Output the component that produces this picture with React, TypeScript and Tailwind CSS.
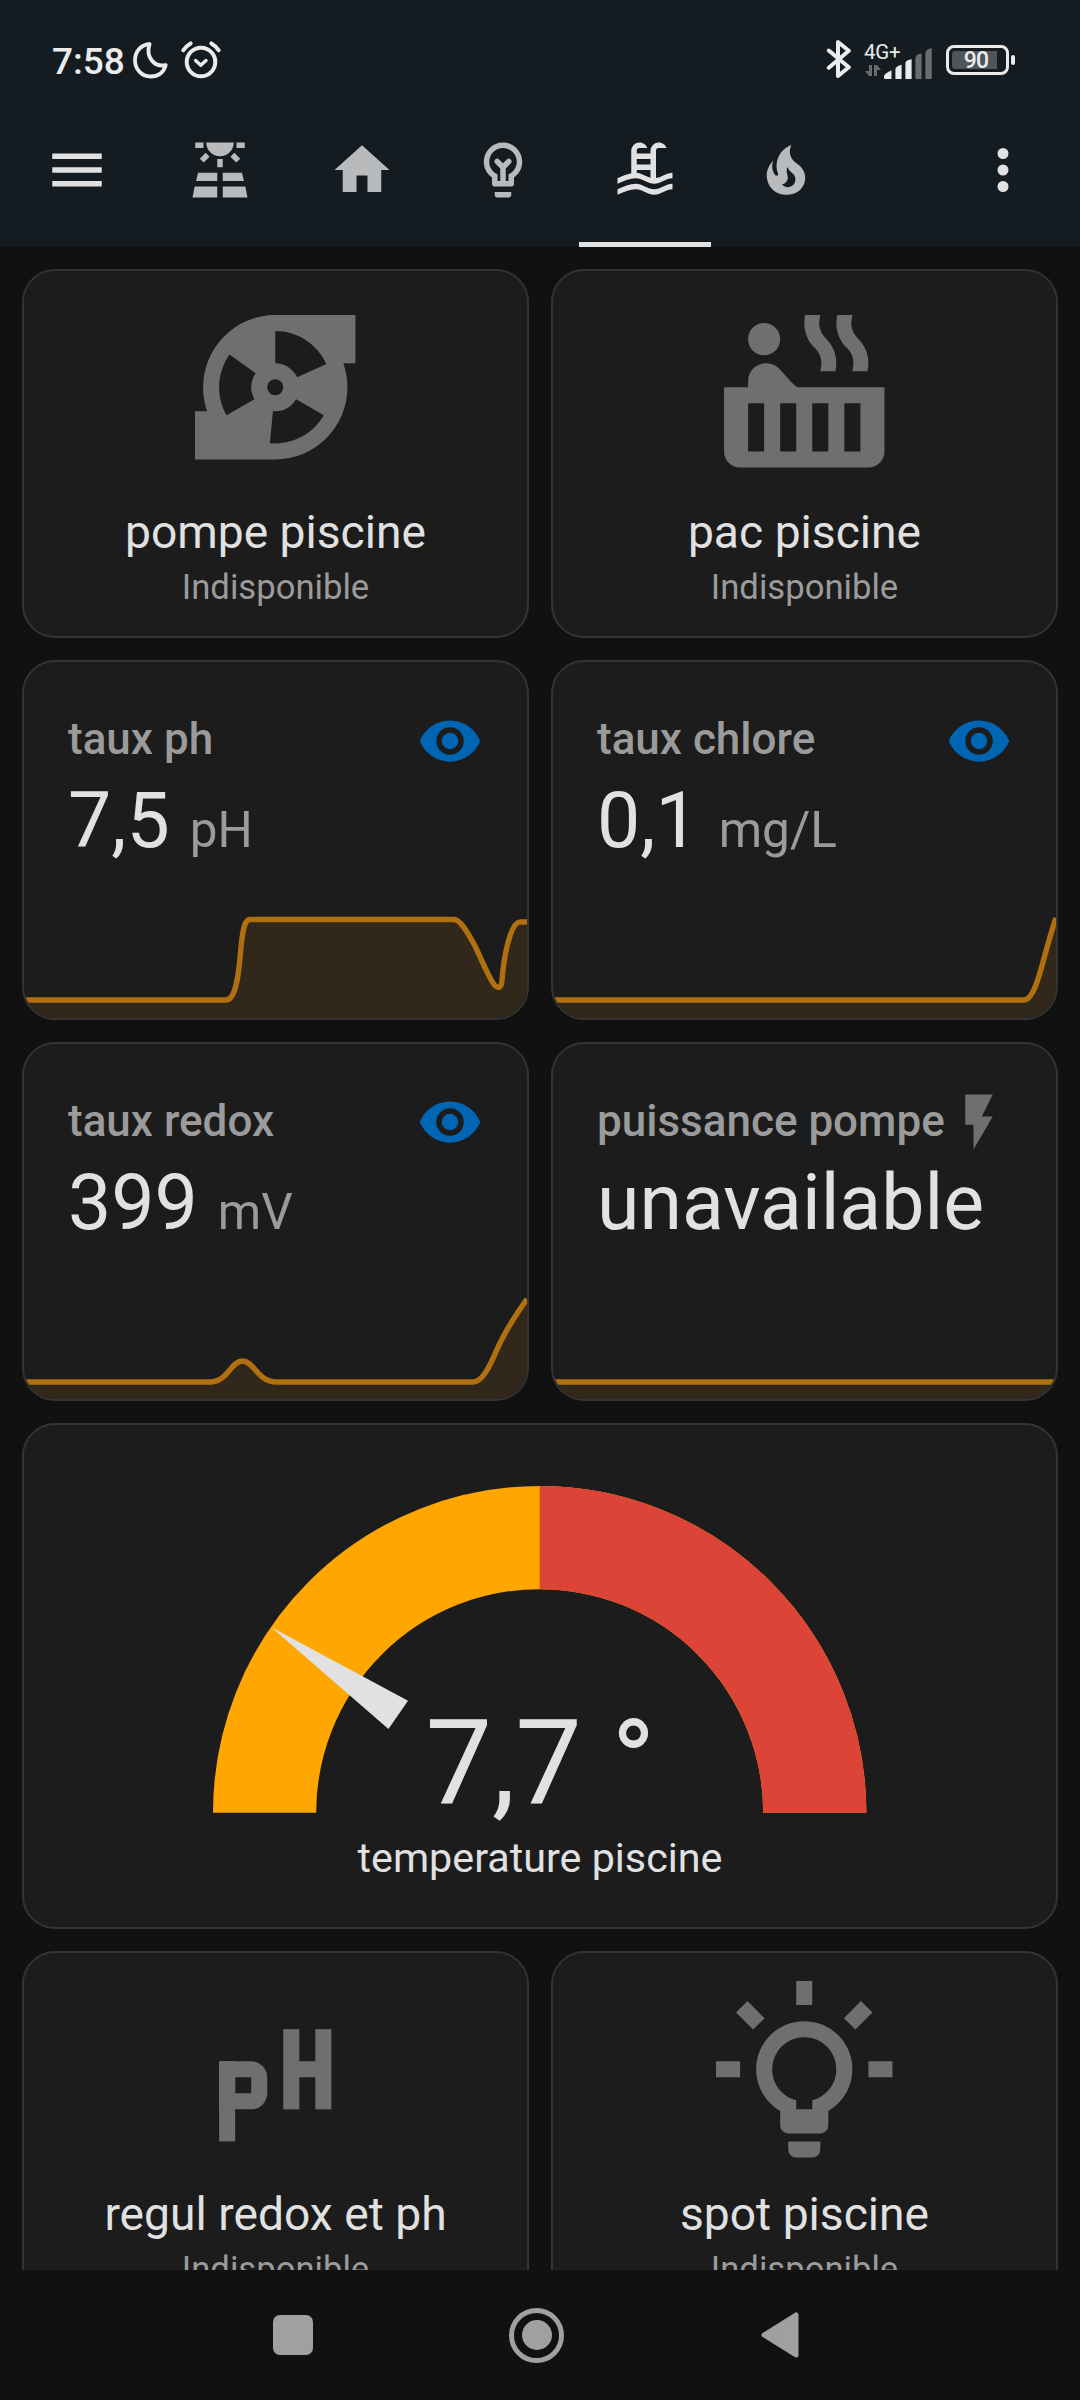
import type { ReactNode } from "react";

const PATHS = {
  menu: "M3,6H21V8H3V6M3,11H21V13H3V11M3,16H21V18H3V16Z",
  solar:
    "M3,2H6V4H3V2M18,2H21V4H18V2M7,2H17A5,5 0 0,1 12,7A5,5 0 0,1 7,2M11,8H13V11H11V8M6.78,5.75L8.2,7.17L6.08,9.3L4.66,7.88L6.78,5.75M17.22,5.75L19.34,7.88L17.92,9.3L15.8,7.17L17.22,5.75M4,13H11V16H3.3L4,13M13,13H20L20.7,16H13V13M2.8,18H11V22H2L2.8,18M13,18H21.2L22,22H13V18Z",
  home: "M10,20V14H14V20H19V12H22L12,3L2,12H5V20H10Z",
  pool: "M2,15C3.67,14.25 5.33,13.5 7,13.17V5A3,3 0 0,1 10,2C11.31,2 12.42,2.83 12.83,4H10A1,1 0 0,0 9,5V6H14V5A3,3 0 0,1 17,2C18.31,2 19.42,2.83 19.83,4H17A1,1 0 0,0 16,5V14.94C18,14.62 20,13 22,13V15C19.78,15 17.56,17 15.33,17C13.11,17 10.89,15 8.67,15C6.44,15 4.22,16 2,17V15M14,8H9V10H14V8M14,12H9V13C10.67,13.16 12.33,14.31 14,14.79V12M2,19C4.22,18 6.44,17 8.67,17C10.89,17 13.11,19 15.33,19C17.56,19 19.78,17 22,17V19C19.78,19 17.56,21 15.33,21C13.11,21 10.89,19 8.67,19C6.44,19 4.22,20 2,21V19Z",
  fire: "M17.66 11.2C17.43 10.9 17.15 10.64 16.89 10.38C16.22 9.78 15.46 9.35 14.82 8.72C13.33 7.26 13 4.85 13.95 3C13 3.23 12.17 3.75 11.46 4.32C8.87 6.4 7.85 10.07 9.07 13.22C9.11 13.32 9.15 13.42 9.15 13.55C9.15 13.77 9 13.97 8.8 14.05C8.57 14.15 8.33 14.09 8.14 13.93C8.08 13.88 8.04 13.83 8 13.76C6.87 12.33 6.69 10.28 7.45 8.64C5.78 10 4.87 12.3 5 14.47C5.06 14.97 5.12 15.47 5.29 15.97C5.43 16.57 5.7 17.17 6 17.7C7.08 19.43 8.95 20.67 10.96 20.92C13.1 21.19 15.39 20.8 17.03 19.32C18.86 17.66 19.5 15 18.56 12.72L18.43 12.46C18.22 12 17.66 11.2 17.66 11.2M14.5 17.5C14.22 17.74 13.76 18 13.4 18.1C12.28 18.5 11.16 17.94 10.5 17.28C11.69 17 12.4 16.12 12.61 15.23C12.78 14.43 12.46 13.77 12.33 13C12.21 12.26 12.23 11.63 12.5 10.94C12.69 11.32 12.89 11.7 13.13 12C13.9 13 15.11 13.44 15.37 14.8C15.41 14.94 15.43 15.08 15.43 15.23C15.46 16.05 15.1 16.95 14.5 17.5Z",
  bulb: "M12,2A7,7 0 0,1 19,9C19,11.38 17.81,13.47 16,14.74V17A1,1 0 0,1 15,18H9A1,1 0 0,1 8,17V14.74C6.19,13.47 5,11.38 5,9A7,7 0 0,1 12,2M9,21V20H15V21A1,1 0 0,1 14,22H10A1,1 0 0,1 9,21M12,4A5,5 0 0,0 7,9C7,11.05 8.23,12.81 10,13.58V16H14V13.58C15.77,12.81 17,11.05 17,9A5,5 0 0,0 12,4Z",
  dots: "M12,16A2,2 0 0,1 14,18A2,2 0 0,1 12,20A2,2 0 0,1 10,18A2,2 0 0,1 12,16M12,10A2,2 0 0,1 14,12A2,2 0 0,1 12,14A2,2 0 0,1 10,12A2,2 0 0,1 12,10M12,4A2,2 0 0,1 14,6A2,2 0 0,1 12,8A2,2 0 0,1 10,6A2,2 0 0,1 12,4Z",
  pump: "M2 21V15H3.5C3.18 14.06 3 13.05 3 12A9 9 0 0 1 12 3H22V9H20.5C20.82 9.94 21 10.95 21 12A9 9 0 0 1 12 21H2M5 12C5 13.28 5.34 14.47 5.94 15.5L9.4 13.5C9.15 13.06 9 12.55 9 12C9 11.35 9.21 10.75 9.56 10.26L6.3 7.93C5.5 9.08 5 10.5 5 12M12 19C14.59 19 16.85 17.59 18.06 15.5L14.6 13.5C14.08 14.4 13.11 15 12 15L11.71 15L11.33 18.97L12 19M12 9C13.21 9 14.26 9.72 14.73 10.76L18.37 9.1C17.27 6.68 14.83 5 12 5V9M12 11A1 1 0 0 0 11 12A1 1 0 0 0 12 13A1 1 0 0 0 13 12A1 1 0 0 0 12 11Z",
  hotTub:
    "M7 4C8.11 4 9 4.89 9 6S8.11 8 7 8 5 7.11 5 6 5.9 4 7 4M11.15 12H22V20C22 21.11 21.11 22 20 22H4C2.9 22 2 21.11 2 20V12H5V11.25C5 10 6 9 7.25 9H7.28C7.62 9 7.95 9.09 8.24 9.23C8.5 9.35 8.74 9.5 8.93 9.73L10.33 11.28C10.56 11.54 10.84 11.78 11.15 12M7 20V14H5V20H7M11 20V14H9V20H11M15 20V14H13V20H15M19 20V14H17V20H19M18.65 5.86C19.68 6.86 20.16 8.21 19.95 9.57L19.89 10H18L18.09 9.41C18.24 8.62 18 7.83 17.42 7.21L17.35 7.15C16.32 6.14 15.85 4.79 16.05 3.43L16.11 3H18L17.91 3.59C17.76 4.38 18 5.17 18.58 5.79L18.65 5.86M14.65 5.86C15.68 6.86 16.16 8.21 15.95 9.57L15.89 10H14L14.09 9.41C14.24 8.62 14 7.83 13.42 7.21L13.35 7.15C12.32 6.14 11.85 4.79 12.05 3.43L12.11 3H14L13.91 3.59C13.76 4.38 14 5.17 14.58 5.79L14.65 5.86Z",
  bulbOn:
    "M20,11H23V13H20V11M1,11H4V13H1V11M13,1V4H11V1H13M4.92,3.5L7.05,5.64L5.63,7.05L3.5,4.93L4.92,3.5M16.95,5.63L19.07,3.5L20.5,4.93L18.37,7.05L16.95,5.63M12,6A6,6 0 0,1 18,12C18,14.22 16.79,16.16 15,17.2V19A1,1 0 0,1 14,20H10A1,1 0 0,1 9,19V17.2C7.21,16.16 6,14.22 6,12A6,6 0 0,1 12,6M14,21V22A1,1 0 0,1 13,23H11A1,1 0 0,1 10,22V21H14M11,17H13V15.87C14.73,15.43 16,13.86 16,12A4,4 0 0,0 12,8A4,4 0 0,0 8,12C8,13.86 9.27,15.43 11,15.87V17Z",
  eye: "M12,9A3,3 0 0,0 9,12A3,3 0 0,0 12,15A3,3 0 0,0 15,12A3,3 0 0,0 12,9M12,17A5,5 0 0,1 7,12A5,5 0 0,1 12,7A5,5 0 0,1 17,12A5,5 0 0,1 12,17M12,4.5C7,4.5 2.73,7.61 1,12C2.73,16.39 7,19.5 12,19.5C17,19.5 21.27,16.39 23,12C21.27,7.61 17,4.5 12,4.5Z",
  flash: "M7,2V13H10V22L17,10H13L17,2H7Z",
};

function Icon({ d, className, children }: { d?: string; className: string; children?: ReactNode }) {
  return (
    <svg viewBox="0 0 24 24" fill="currentColor" className={`shrink-0 ${className}`}>
      {d && <path d={d} />}
      {children}
    </svg>
  );
}

function StatusBar() {
  return (
    <div className="flex h-[93px] items-start justify-between pt-[37px] pr-[65px] pl-[52px] text-[#ebebeb]">
      <div className="flex items-center">
        <span className="w-[73px] text-[37px] leading-[50px] font-medium">7:58</span>
        <svg viewBox="0 0 36 38" className="ml-[7px] h-[38px] w-[36px] -mt-[4px]" fill="none" stroke="currentColor" strokeWidth="3.8" strokeLinejoin="round">
          <path d="M17.6 3C8 4 3 11 3 19.5C3 28.5 10 35.5 18.5 35.5C26.5 35.5 32 31 33.7 24C23.5 26.5 13 17.5 17.6 3Z" />
        </svg>
        <svg viewBox="0 0 40 38" className="ml-[13px] h-[38px] w-[40px] -mt-[4px]" fill="none" stroke="currentColor" strokeWidth="4" strokeLinecap="round" strokeLinejoin="round">
          <circle cx="20" cy="21" r="14.3" />
          <path d="M14.6 19.5L19.8 24.3L25 19.5" strokeWidth="3.4" />
          <path d="M2.4 9.3Q5 5 9.6 2.4M37.6 9.3Q35 5 30.4 2.4" />
        </svg>
      </div>
      <div className="flex items-start">
        <svg viewBox="0 0 26 40" className="mt-[2px] h-[40px] w-[26px]" fill="none" stroke="currentColor" strokeWidth="4" strokeLinecap="round" strokeLinejoin="round">
          <path d="M2.8 11.5L22.8 28.2L12 37V3L22.8 11.8L2.8 28.8" />
        </svg>
        <div className="ml-[12px] flex h-[41px] w-[70px] items-end">
          <div className="flex w-[20px] flex-col">
            <span className="text-[20.5px] leading-[22px] tracking-[-0.3px] whitespace-nowrap">4G+</span>
            <svg viewBox="0 0 20 14" className="mt-px h-[14px] w-[20px]" fill="#686d71">
              <path d="M5 1H8V12H5L1 7H5ZM10 1H13L17 6H13V12H10Z" />
            </svg>
          </div>
          <svg viewBox="0 0 50 32" className="-mb-px h-[32px] w-[50px]">
            <path d="M0 31V29Q1 26 7.5 23.5V32H1Z" fill="currentColor" />
            <path d="M11.4 32V22Q12 19 17.6 17.7V32Z" fill="currentColor" />
            <path d="M21.4 32V16Q22 13 27.6 12.3V32Z" fill="currentColor" />
            <path d="M31.4 32V11Q32 7.5 37.6 6.6V32Z" fill="#686d71" />
            <path d="M41.4 32V6Q42 2 47.8 1V32Z" fill="#686d71" />
          </svg>
        </div>
        <div className="mt-[8px] ml-[12px] flex items-center gap-[2px]">
          <div className="flex h-[30px] w-[63px] items-center rounded-[8px] border-[3px] border-[#ebebeb] p-[3px]">
            <div className="flex h-[18px] w-[45px] items-center justify-center rounded-l-[3px] bg-[#4f555a] pt-[2px] pl-[3px] text-[23px] leading-[18px] font-medium tracking-[-0.8px]">
              90
            </div>
          </div>
          <div className="h-[10px] w-[4px] rounded-[2px] bg-[#ebebeb]" />
        </div>
      </div>
    </div>
  );
}

function Tab({ active = false, children }: { active?: boolean; children: ReactNode }) {
  return (
    <div className={`flex w-[141.5px] flex-col items-center ${active ? "text-[#e1e1e1]" : "text-[#b9babc]"}`}>
      <div className="flex h-[149px] items-center pt-[5px]">{children}</div>
      {active && <div className="h-[5px] w-[132px] bg-[#e1e1e1]" />}
    </div>
  );
}

function Toolbar() {
  return (
    <div className="flex h-[154px] items-start text-[#e1e1e1]">
      <div className="flex h-[149px] w-[149.4px] items-center pt-[5px] pl-[44px]">
        <Icon d={PATHS.menu} className="size-[66px]" />
      </div>
      <Tab>
        <Icon d={PATHS.solar} className="size-[66px]" />
      </Tab>
      <Tab>
        <Icon d={PATHS.home} className="size-[66px]" />
      </Tab>
      <Tab>
        <Icon d={PATHS.bulb} className="size-[66px]">
          <path d="M9.9 8.9L12 11L14.1 8.9M12 11V16.5" fill="none" stroke="currentColor" strokeWidth="2" strokeLinecap="round" />
        </Icon>
      </Tab>
      <Tab active>
        <Icon d={PATHS.pool} className="size-[66px]" />
      </Tab>
      <Tab>
        <Icon d={PATHS.fire} className="size-[66px]" />
      </Tab>
      <div className="ml-auto flex h-[149px] items-center pt-[5px] pr-[44px]">
        <Icon d={PATHS.dots} className="size-[66px]" />
      </div>
    </div>
  );
}

const CARD = "overflow-hidden rounded-[33px] border-2 border-[#333333] bg-[#1c1c1c]";

function ButtonCard({ name, children }: { name: string; children: ReactNode }) {
  return (
    <div className={`${CARD} flex h-[369px] flex-col items-center pt-[20px]`}>
      {children}
      <div className="mt-[21.5px] text-[46.2px] leading-[54px] text-[#e1e1e1]">{name}</div>
      <div className="mt-[8px] text-[34.65px] leading-[40px] text-[#9b9b9b]">Indisponible</div>
    </div>
  );
}

interface SensorProps {
  name: string;
  value: string;
  unit?: string;
  graph: string;
  icon: ReactNode;
  className: string;
}

function SensorCard({ name, value, unit, graph, icon, className }: SensorProps) {
  return (
    <div className={`${CARD} ${className}`}>
      <div className="flex h-[110px] items-start justify-between px-[44px] pt-[44px]">
        <span className="text-[44px] leading-[66px] font-medium whitespace-nowrap text-[#9b9b9b]">{name}</span>
        {icon}
      </div>
      <div className="mt-[4px] flex h-[90px] items-baseline gap-[20px] px-[44px] leading-[90px]">
        <span className="text-[77px] text-[#e1e1e1]">{value}</span>
        {unit && <span className="text-[49.5px] text-[#9b9b9b]">{unit}</span>}
      </div>
      <svg viewBox="0 0 503 110" className="mt-[48px] block h-[110px] w-[503px]" fill="none">
        <path d={`${graph}V110H0Z`} fill="#31271a" />
        <path d={graph} stroke="#b0700f" strokeWidth="5.4" strokeLinejoin="round" />
      </svg>
    </div>
  );
}

function GaugeCard() {
  return (
    <div className={`${CARD} flex h-[506px] flex-col items-center pt-[61px]`}>
      <div className="relative h-[327px] w-[653.4px]">
        <svg viewBox="-47.5 -47.5 95 47.5" className="h-[326.7px] w-[653.4px]" fill="none">
          <path d="M-40 0A40 40 0 0 1 40 0" stroke="#ffa600" strokeWidth="15" />
          <path d="M0 -40A40 40 0 0 1 40 0" stroke="#db4437" strokeWidth="15" />
          <path d="M-25 -2.5L-47.5 0L-25 2.5Z" fill="#e1e1e1" transform="rotate(34.65)" />
        </svg>
        <div className="absolute inset-x-0 -bottom-[10px] pl-px text-center text-[118.5px] leading-[119px] text-[#e1e1e1]">7,7 °</div>
      </div>
      <div className="mt-[21px] text-[41.25px] leading-[48px] text-[#e1e1e1]">temperature piscine</div>
    </div>
  );
}

function SystemNav() {
  return (
    <div className="flex h-[130px] items-center bg-[#111111] pl-[273px]">
      <div className="h-[40px] w-[40px] rounded-[7px] bg-[#a0a0a0]" />
      <div className="ml-[196px] flex size-[55px] items-center justify-center rounded-full border-[5px] border-[#a0a0a0]">
        <div className="size-[30px] rounded-full bg-[#a0a0a0]" />
      </div>
      <svg viewBox="0 0 38 46" className="ml-[197px] h-[46px] w-[38px]">
        <path d="M3 23L35 3V43Z" fill="#a0a0a0" stroke="#a0a0a0" strokeWidth="5" strokeLinejoin="round" />
      </svg>
    </div>
  );
}

export default function App() {
  const eye = <Icon d={PATHS.eye} className="mt-[2px] size-[66px] text-[#0065b3]" />;
  const eyeRaised = <Icon d={PATHS.eye} className="mt-px size-[66px] text-[#0065b3]" />;
  return (
    <div className="flex h-[2400px] w-[1080px] flex-col overflow-hidden bg-[#111111] font-['Roboto',sans-serif]">
      <header className="h-[247px] shrink-0 bg-[#141c22]">
        <StatusBar />
        <Toolbar />
      </header>
      <main className="flex h-[2023px] shrink-0 flex-col gap-[22px] overflow-hidden px-[22px] pt-[22px]">
        <div className="grid shrink-0 grid-cols-2 gap-[22px]">
          <ButtonCard name="pompe piscine">
            <Icon d={PATHS.pump} className="size-[192.5px] text-[#6f6f6f]" />
          </ButtonCard>
          <ButtonCard name="pac piscine">
            <Icon d={PATHS.hotTub} className="size-[192.5px] text-[#6f6f6f]" />
          </ButtonCard>
        </div>
        <div className="grid shrink-0 grid-cols-2 gap-[22px]">
          <SensorCard
            className="h-[360px]"
            name="taux ph"
            value="7,5"
            unit="pH"
            icon={eye}
            graph="M0 86H202C211 86 214.5 66 217 33C219 14 221 5.5 226 5.5H430C436 5.5 443 17 451 32C459 49 464 62 470 70.5C475 76 477.5 73 478 66C480 40 487 8 496 8H503"
          />
          <SensorCard
            className="h-[360px]"
            name="taux chlore"
            value="0,1"
            unit="mg/L"
            icon={eye}
            graph="M0 86H471C480 86 486 63 490 48C495 30 498 18 503 4"
          />
        </div>
        <div className="grid shrink-0 grid-cols-2 gap-[22px]">
          <SensorCard
            className="h-[359px]"
            name="taux redox"
            value="399"
            unit="mV"
            icon={eyeRaised}
            graph="M0 86H187C203 86 207 65 218.5 65S234 86 252 86H449C459 86 466 69 472 55.7C480 37 490 21 503 3"
          />
          <SensorCard
            className="h-[359px]"
            name="puissance pompe"
            value="unavailable"
            icon={<Icon d={PATHS.flash} className="mt-px size-[66px] text-[#6f6f6f]" />}
            graph="M0 86H503"
          />
        </div>
        <div className="shrink-0">
          <GaugeCard />
        </div>
        <div className="grid shrink-0 grid-cols-2 gap-[22px]">
          <ButtonCard name="regul redox et ph">
            <Icon className="size-[192.5px] text-[#6f6f6f]">
              <rect x="5" y="11" width="2" height="10" />
              <rect x="6" y="12" width="4" height="4" rx="1" fill="none" stroke="currentColor" strokeWidth="2" />
              <rect x="5" y="11" width="2" height="6" />
              <rect x="13" y="7" width="2" height="10" />
              <rect x="17" y="7" width="2" height="10" />
              <rect x="14.9" y="11" width="2.2" height="2" />
            </Icon>
          </ButtonCard>
          <ButtonCard name="spot piscine">
            <Icon d={PATHS.bulbOn} className="size-[192.5px] text-[#6f6f6f]" />
          </ButtonCard>
        </div>
      </main>
      <SystemNav />
    </div>
  );
}
